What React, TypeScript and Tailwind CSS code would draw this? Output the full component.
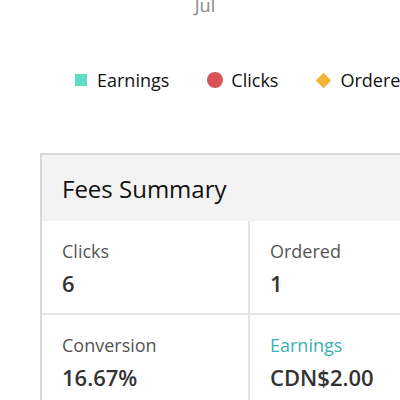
import React from 'react';

const stats = [
    { label: 'Clicks', value: '6' },
    { label: 'Ordered', value: '1' },
    { label: 'Conversion', value: '16.67%' },
    { label: 'Earnings', value: 'CDN$2.00', accent: true },
];

export default function App() {
    return (
        <div
            className="w-[400px] h-[400px] overflow-hidden bg-white relative"
            style={{ fontFamily: '"Open Sans", "Noto Sans", sans-serif' }}
        >
            <div className="w-[470px]">
                {/* axis label left over from the chart above */}
                <div className="h-[20px] flex justify-center pr-[60px] -mt-[5px]">
                    <span className="text-[18px] leading-[20px] text-[#888]">Jul</span>
                </div>

                {/* legend */}
                <div className="mt-[53px] pl-[75px] flex items-center h-[24px] text-[18px] text-[#111]">
                    <span className="w-[12px] h-[12px] bg-[#5fdcc3]" />
                    <span className="ml-[10px]">Earnings</span>
                    <span className="ml-[38px] w-[16px] h-[16px] rounded-full bg-[#d6545a]" />
                    <span className="ml-[8px]">Clicks</span>
                    <span className="ml-[40px] w-[11px] h-[11px] rotate-45 bg-[#f0b43a]" />
                    <span className="ml-[11px]">Ordered</span>
                </div>

                {/* fees summary card */}
                <div className="mt-[61px] ml-[40px] w-[420px] border-2 border-[#d8d8d8]">
                    <div className="h-[66px] bg-[#f3f3f3] flex items-center pl-[20px]">
                        <h2 className="text-[24px] text-[#111] pt-[2px]">Fees Summary</h2>
                    </div>
                    <div className="grid grid-cols-2">
                        {stats.map((s, i) => (
                            <div
                                key={s.label}
                                className={`h-[94px] pl-[20px] pt-[17px] ${i % 2 === 0 ? 'border-r-2 border-[#e4e4e4]' : ''} ${i < 2 ? 'border-b-2 border-[#e4e4e4]' : ''}`}
                            >
                                <div className={`text-[18px] leading-[26px] ${s.accent ? 'text-[#3bb0b3]' : 'text-[#555]'}`}>
                                    {s.label}
                                </div>
                                <div className="mt-[5px] text-[22px] leading-[28px] font-semibold text-[#333]">
                                    {s.value}
                                </div>
                            </div>
                        ))}
                    </div>
                </div>
            </div>
        </div>
    );
}
